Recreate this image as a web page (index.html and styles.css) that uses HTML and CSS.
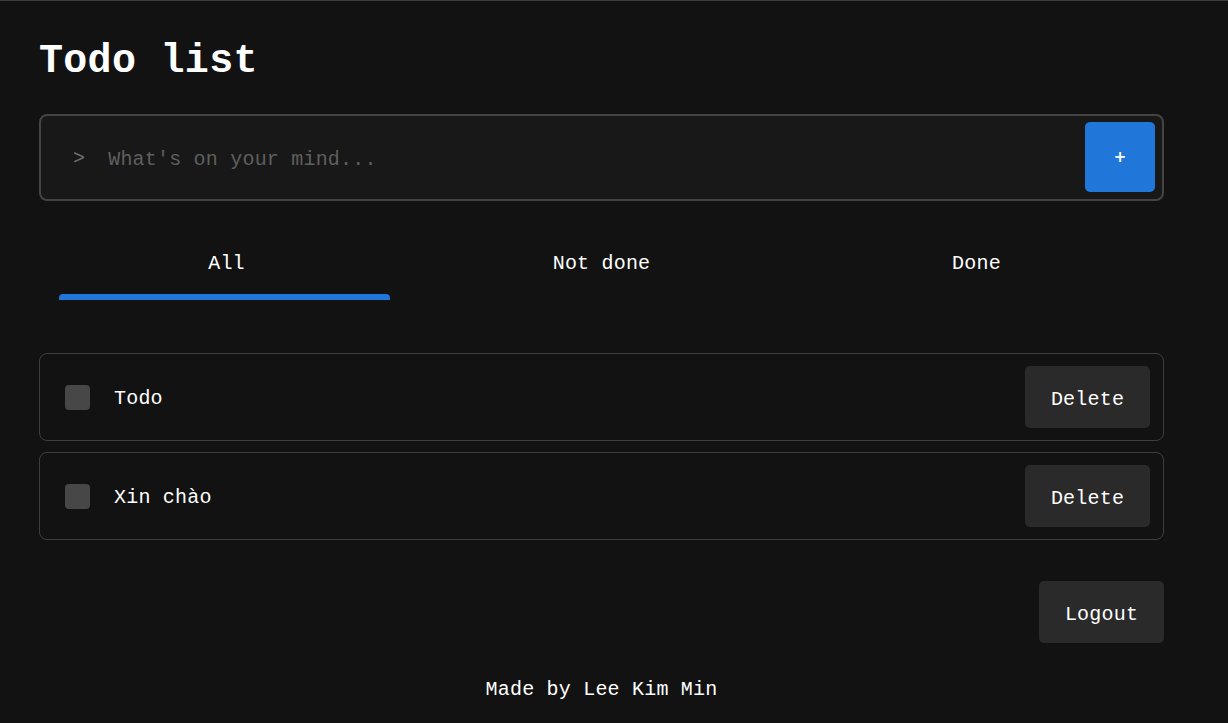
FILE: index.html
```html
<!DOCTYPE html>
<html lang="en">
<head>
<meta charset="utf-8">
<title>Todo list</title>
<link rel="stylesheet" href="styles.css">
</head>
<body>
<main class="app">
  <h1 class="title">Todo list</h1>
  <form class="composer">
    <span class="prompt">&gt;</span>
    <input class="composer-input" type="text" placeholder="What's on your mind...">
    <button class="add-btn" type="button">+</button>
  </form>
  <nav class="tabs">
    <div class="tab active"><span class="tab-label">All</span><span class="tab-bar"></span></div>
    <div class="tab"><span class="tab-label">Not done</span><span class="tab-bar"></span></div>
    <div class="tab"><span class="tab-label">Done</span><span class="tab-bar"></span></div>
  </nav>
  <ul class="todos">
    <li class="todo">
      <span class="check"></span>
      <span class="todo-text">Todo</span>
      <button class="btn" type="button">Delete</button>
    </li>
    <li class="todo">
      <span class="check"></span>
      <span class="todo-text">Xin chào</span>
      <button class="btn" type="button">Delete</button>
    </li>
  </ul>
  <div class="actions">
    <button class="btn" type="button">Logout</button>
  </div>
  <footer class="footer">Made by Lee Kim Min</footer>
</main>
</body>
</html>
```
FILE: styles.css
```css
html, body {
  margin: 0;
  padding: 0;
  background: #121212;
}
body {
  border-top: 1px solid #3c3c3c;
  color: #ffffff;
  font-family: "Liberation Mono", "DejaVu Sans Mono", monospace;
  font-size: 20px;
  letter-spacing: 0.2px;
}
.app {
  width: 1125px;
  margin-left: 39px;
}
.title {
  margin: 37px 0 0;
  font-size: 40px;
  line-height: 48px;
  font-weight: 700;
  letter-spacing: 0.3px;
}
.composer {
  margin: 28px 0 0;
  display: flex;
  align-items: center;
  height: 87px;
  box-sizing: border-box;
  border: 2px solid #444444;
  border-radius: 8px;
  background: #181818;
  padding: 6px 7px 7px 32px;
}
.prompt {
  color: #707070;
  margin-right: 23px;
  line-height: 24px;
  padding-top: 4px;
}
.composer-input {
  flex: 1;
  background: transparent;
  border: none;
  outline: none;
  color: #fff;
  font: inherit;
  font-size: 20px;
  letter-spacing: 0.2px;
  padding: 4px 0 0;
}
.composer-input::placeholder {
  color: #5f5f5f;
}
.add-btn {
  width: 70px;
  height: 70px;
  border: none;
  border-radius: 5px;
  background: #2176d9;
  color: #fff;
  font-family: "DejaVu Sans", sans-serif;
  font-size: 15px;
  font-weight: 700;
  padding: 0;
}
.tabs {
  margin-top: 39px;
  display: flex;
}
.tab {
  flex: 1;
  display: flex;
  flex-direction: column;
  align-items: stretch;
  padding-top: 12px;
}
.tab-label {
  text-align: center;
  line-height: 24px;
}
.tab-bar {
  margin: 18px 24px 0 20px;
  height: 6px;
  border-radius: 4px 4px 0 0;
}
.tab.active .tab-bar {
  background: #2176d9;
}
.todos {
  list-style: none;
  margin: 53px 0 0;
  padding: 0;
  display: flex;
  flex-direction: column;
  gap: 11px;
}
.todo {
  display: flex;
  align-items: center;
  border: 1px solid #3e3e3e;
  border-radius: 8px;
  padding: 12px 13px 12px 25px;
}
.check {
  width: 25px;
  height: 25px;
  border-radius: 4px;
  background: #474747;
  margin-right: 24px;
  flex: none;
}
.todo-text {
  flex: 1;
  line-height: 24px;
  padding-top: 4px;
}
.btn {
  width: 125px;
  height: 62px;
  border: none;
  border-radius: 5px;
  background: #2a2a2a;
  color: #fff;
  font: inherit;
  font-size: 20px;
  letter-spacing: 0.2px;
  padding: 4px 0 0;
}
.actions {
  margin-top: 41px;
  display: flex;
  justify-content: flex-end;
}
.footer {
  margin-top: 32px;
  text-align: center;
  line-height: 24px;
  padding-top: 3px;
}
```
